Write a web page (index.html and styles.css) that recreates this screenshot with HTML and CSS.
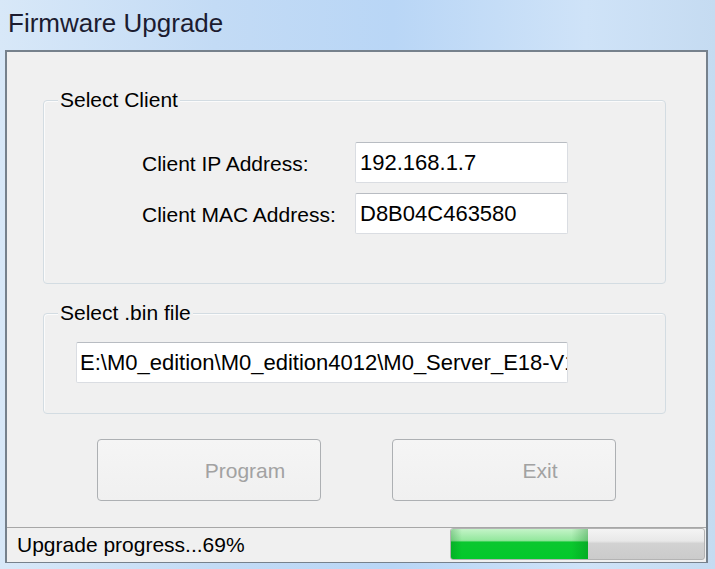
FILE: index.html
```html
<!DOCTYPE html>
<html lang="en">
<head>
<meta charset="utf-8">
<title>Firmware Upgrade</title>
<link rel="stylesheet" href="styles.css">
</head>
<body>
  <div class="titlebar">Firmware Upgrade</div>
  <div class="window">
    <div class="group group-client">
      <div class="legend">Select Client</div>
      <div class="row row-first">
        <span class="label">Client IP Address:</span>
        <input class="field" type="text" value="192.168.1.7" readonly>
      </div>
      <div class="row">
        <span class="label">Client MAC Address:</span>
        <input class="field" type="text" value="D8B04C463580" readonly>
      </div>
    </div>
    <div class="group group-file">
      <div class="legend">Select .bin file</div>
      <input class="field field-path" type="text" value="E:\M0_edition\M0_edition4012\M0_Server_E18-V1.0.bin" readonly>
    </div>
    <div class="buttons">
      <button class="btn btn-program" disabled>Program</button>
      <button class="btn btn-exit" disabled>Exit</button>
    </div>
    <div class="statusbar">
      <span class="status-text">Upgrade progress...69%</span>
      <div class="progress"><div class="progress-fill" style="width: 137px"></div></div>
    </div>
  </div>
</body>
</html>
```

FILE: styles.css
```css
* { box-sizing: border-box; }

html, body {
  margin: 0;
  padding: 0;
}

body {
  width: 715px;
  height: 569px;
  overflow: hidden;
  font-family: "Liberation Sans", Arial, sans-serif;
  background: linear-gradient(to right, #d8e8f8 0%, #c3dbf5 30%, #b9d6f6 55%, #cfe3f8 82%, #c5dbf1 100%);
}

.titlebar {
  height: 50px;
  line-height: 46px;
  padding-left: 8px;
  font-size: 26px;
  color: #1c1c30;
  white-space: nowrap;
}

.window {
  margin-left: 5px;
  width: 703px;
  height: 513px;
  border: 2px solid #76818c;
  border-bottom-width: 1px;
  background: #f0f0f0;
  display: flex;
  flex-direction: column;
  align-items: flex-start;
}

.group {
  width: 623px;
  margin-left: 36px;
  border: 1px solid #d3dce2;
  border-radius: 4px;
  box-shadow: inset 1px 1px 0 #fbfbfb;
}

.group-client {
  margin-top: 48px;
  padding-bottom: 49px;
}

.group-file {
  margin-top: 29px;
  padding-bottom: 30px;
}

.legend {
  width: fit-content;
  margin: -12px 0 0 14px;
  padding: 0 2px;
  background: #f0f0f0;
  font-size: 21px;
  line-height: 22px;
  color: #000;
}

.row {
  display: flex;
  align-items: center;
  margin-top: 10px;
  padding-left: 98px;
}

.row-first {
  margin-top: 31px;
}

.label {
  width: 213px;
  padding-top: 3px;
  font-size: 21px;
  color: #000;
  white-space: nowrap;
}

.field {
  display: block;
  width: 213px;
  height: 41px;
  margin: 0;
  padding: 1px 0 0 4px;
  border: 1px solid #dadde2;
  border-top-color: #b8bcc2;
  border-radius: 2px;
  background: #fff;
  font-family: "Liberation Sans", Arial, sans-serif;
  font-size: 22px;
  color: #000;
  outline: none;
}

.field-path {
  width: 492px;
  margin: 18px 0 0 32px;
  padding-left: 3px;
}

.buttons {
  display: flex;
  margin-top: 25px;
  margin-left: 90px;
  gap: 71px;
}

.btn {
  width: 224px;
  height: 62px;
  margin: 0;
  padding: 2px 0 0 72px;
  border: 1px solid #adb0b3;
  border-radius: 4px;
  background: linear-gradient(#f5f5f5, #f0f0f0);
  font-family: "Liberation Sans", Arial, sans-serif;
  font-size: 21px;
  color: #a2a2a2;
  text-align: center;
}

.statusbar {
  margin-top: auto;
  width: 100%;
  height: 35px;
  border-top: 1px solid #a7a7a7;
  display: flex;
  align-items: flex-start;
}

.status-text {
  padding: 6px 0 0 10px;
  font-size: 21px;
  line-height: 22px;
  color: #000;
  white-space: nowrap;
}

.progress {
  margin-left: auto;
  margin-right: 1px;
  width: 255px;
  height: 32px;
  border: 1px solid #b3b3b3;
  border-radius: 3px;
  background: linear-gradient(#f4f4f4 0%, #e8e8e8 40%, #d2d2d2 48%, #cbcbcb 100%);
  overflow: hidden;
}

.progress-fill {
  height: 100%;
  background:
    linear-gradient(to right, rgba(0, 110, 20, 0.25), rgba(0, 0, 0, 0) 8%, rgba(0, 0, 0, 0) 88%, rgba(0, 110, 20, 0.3)),
    linear-gradient(#c4f4c8 0%, #93e79d 38%, #0bc72f 44%, #03c92b 100%);
}
```
